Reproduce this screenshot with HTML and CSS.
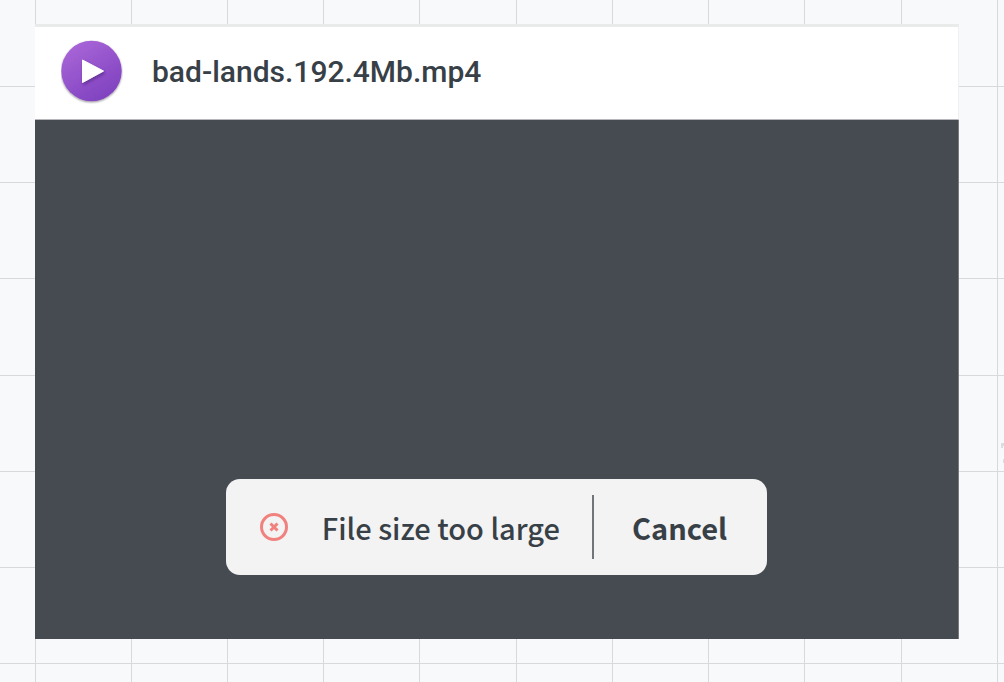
FILE: index.html
```html
<!DOCTYPE html>
<html lang="en">
<head>
<meta charset="utf-8">
<meta name="viewport" content="width=device-width, initial-scale=1">
<title>Video upload</title>
<link rel="stylesheet" href="styles.css">
</head>
<body>
<svg class="grid" aria-hidden="true">
  <path d="M35.500 0V4000M131.500 0V4000M227.500 0V4000M323.500 0V4000M419.500 0V4000M516.500 0V4000M612.500 0V4000M708.500 0V4000M804.500 0V4000M901.500 0V4000M997.500 0V4000"/>
  <path d="M0 86.500H4000M0 182.500H4000M0 278.500H4000M0 375.500H4000M0 471.500H4000M0 567.500H4000M0 663.500H4000"/>
  <path class="mark" d="M1001 443h3v3h-1v2h-2zM1003 459h1v4h-1z"/>
</svg>
<main class="card">
  <header class="card-header">
    <svg class="play" viewBox="0 0 62 64" aria-hidden="true">
      <defs>
        <linearGradient id="purple" x1="0.2" y1="0" x2="0.8" y2="1">
          <stop offset="0" stop-color="#aa66d8"/>
          <stop offset="1" stop-color="#7d40be"/>
        </linearGradient>
        <filter id="shadow" x="-20%" y="-20%" width="150%" height="150%">
          <feDropShadow dx="0" dy="1" stdDeviation="0.8" flood-color="#000" flood-opacity="0.45"/>
        </filter>
        <filter id="arrow-shadow" x="-30%" y="-30%" width="170%" height="170%">
          <feDropShadow dx="1" dy="2" stdDeviation="1.5" flood-color="#35145e" flood-opacity="0.5"/>
        </filter>
      </defs>
      <circle cx="30.500" cy="31" r="30.200" fill="url(#purple)" filter="url(#shadow)"/>
      <path d="M21.500 20L42.500 31L21.500 42.500Z" fill="#fff" stroke="#fff" stroke-width="1" stroke-linejoin="round" filter="url(#arrow-shadow)"/>
    </svg>
    <h1 class="filename">bad-lands.192.4Mb.mp4</h1>
  </header>
  <section class="preview">
    <div class="toast">
      <div class="message" role="alert">
        <svg class="error" viewBox="0 0 28 28" aria-hidden="true">
          <circle cx="14" cy="14" r="12.500"/>
          <path d="M10.500 10.500L17.500 17.500M17.500 10.500L10.500 17.500"/>
        </svg>
        <span>File size too large</span>
      </div>
      <button class="cancel" type="button">Cancel</button>
    </div>
  </section>
</main>
</body>
</html>
```
FILE: styles.css
```css
* {
  box-sizing: border-box;
}

body {
  margin: 0;
  min-height: 100vh;
  display: flex;
  padding: 24px 45px 43px 35px;
  background: #f8f9fb;
  color: #384047;
  font-family: "Noto Sans CJK SC", "Noto Sans", sans-serif;
}

.grid {
  position: absolute;
  inset: 0;
  width: 100%;
  height: 100%;
  fill: none;
  stroke: #d8d9dc;
}

.grid .mark {
  fill: #dcdddf;
  stroke: none;
}

.card {
  position: relative;
  flex: 1;
  display: flex;
  flex-direction: column;
}

.card-header {
  display: flex;
  align-items: center;
  gap: 29px;
  padding: 13px 26px 15px;
  background: #fff;
  border: 1px solid #eff0f1;
  border-top: 3px solid #e9eaea;
  border-left: 0;
  border-bottom-color: #b5b7ba;
}

.play {
  width: 62px;
  height: 64px;
}

.filename {
  margin: 0;
  font: 500 30px/40px Roboto, "Liberation Sans", sans-serif;
}

.preview {
  flex: 1;
  display: flex;
  align-items: flex-end;
  justify-content: center;
  padding: 64px 0;
  background: #464a51;
  border-right: 1px solid #777a7f;
}

.toast {
  display: flex;
  align-items: center;
  background: #f3f3f3;
  border-radius: 14px;
  padding: 16px 0;
}

.message {
  display: flex;
  align-items: center;
  gap: 34px;
  padding: 0 32px 0 34px;
  font-size: 29px;
  font-weight: 500;
  line-height: 64px;
}

.error {
  width: 28px;
  height: 28px;
  fill: none;
  stroke: #f1817e;
  stroke-width: 3;
}

.cancel {
  border: 0;
  border-left: 2px solid #70757a;
  background: none;
  padding: 0 40px 0 38px;
  color: inherit;
  font: inherit;
  font-size: 29px;
  font-weight: 700;
  line-height: 64px;
}
```
